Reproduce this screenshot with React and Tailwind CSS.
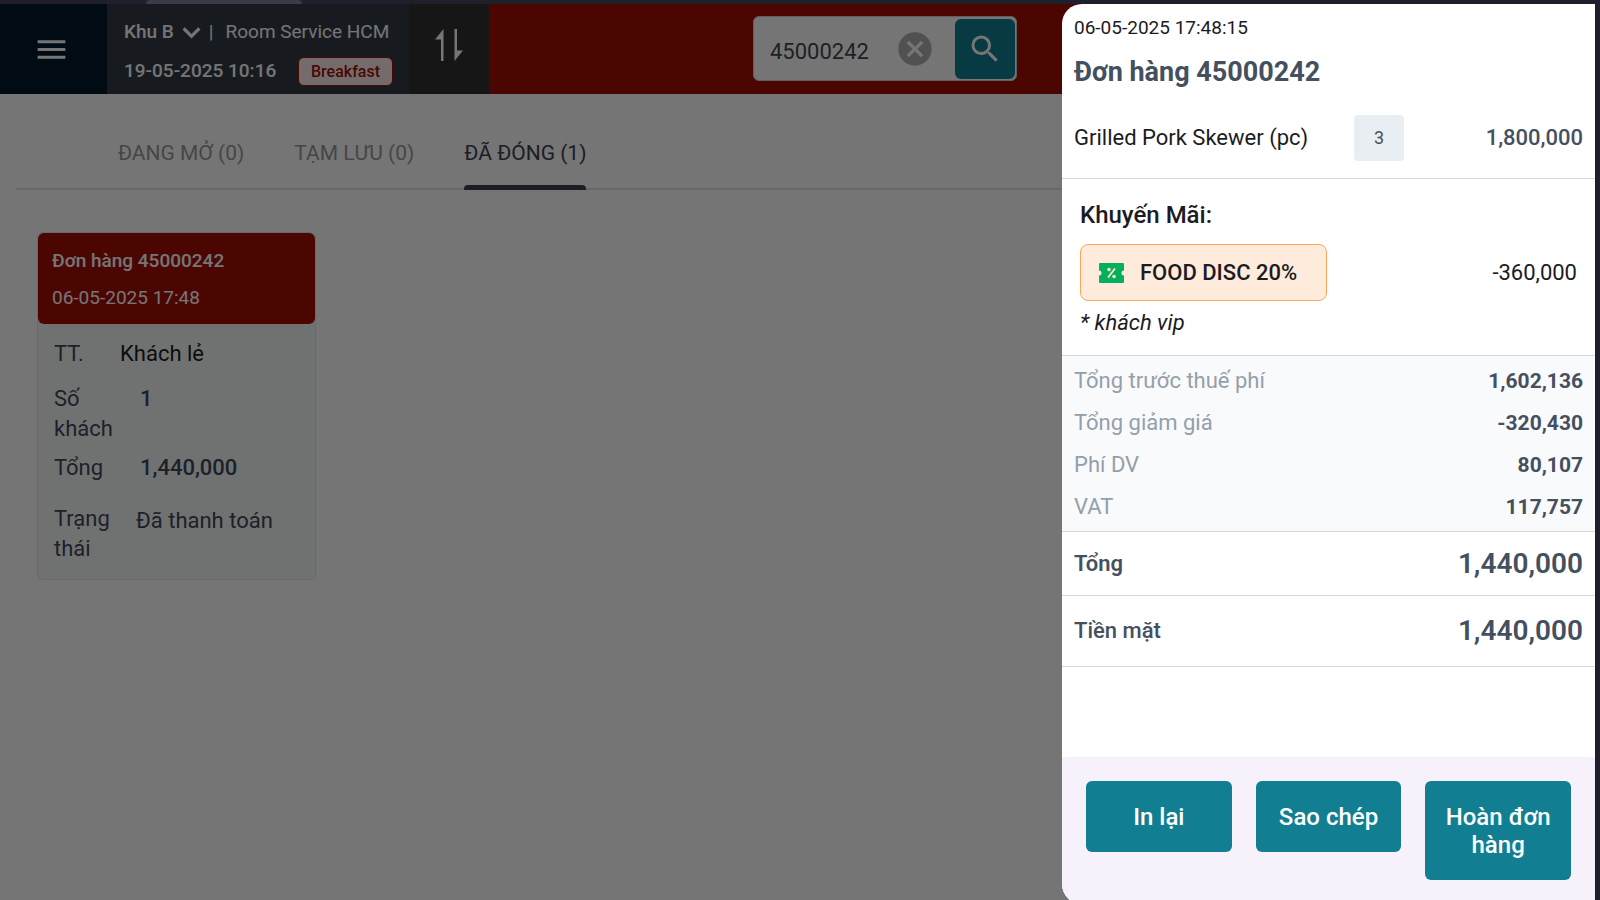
import React from "react";
import { MdMenu, MdSearch, MdCancel } from "react-icons/md";

const tabs = [
  { name: "ĐANG MỞ (0)" },
  { name: "TẠM LƯU (0)" },
  { name: "ĐÃ ĐÓNG (1)", active: true },
];

const fees = [
  { label: "Tổng trước thuế phí", value: "1,602,136" },
  { label: "Tổng giảm giá", value: "-320,430" },
  { label: "Phí DV", value: "80,107" },
  { label: "VAT", value: "117,757" },
];

const App = () => {
  return (
    <div className="h-screen overflow-hidden flex flex-col bg-[#1f1f2b] font-['Roboto',sans-serif] text-[22px] leading-[30px] text-[#1c1b1f]">
      {/* Window edge */}
      <div className="h-1 shrink-0 pl-[146px]">
        <div className="h-1 w-[156px] bg-[#3b3a48] rounded-t-lg" />
      </div>

      <div className="relative h-full shrink-0 mr-[5px] bg-white">
        <Header />
        <main>
          <Tabs />
          <div className="pl-[37px] pt-[42px]">
            <OrderCard />
          </div>
        </main>

        {/* Backdrop */}
        <div className="absolute inset-0 bg-black/54" />
        <OrderDrawer />
      </div>
    </div>
  );
};

const Header = () => {
  return (
    <header className="flex h-[90px] bg-[#a60e05] text-white">
      <button
        aria-label="Menu"
        className="w-[107px] flex items-center justify-center bg-[#001a2c] pr-1"
      >
        <MdMenu className="size-[37px]" />
      </button>

      <div className="w-[302px] bg-[#343b46] pl-[17px] pt-[13px] text-[19px]">
        <div className="flex items-center">
          <button className="flex items-center font-medium">
            Khu B
            <svg
              className="ml-2 w-[19px] h-[13px]"
              viewBox="0 0 20 14"
              fill="none"
              stroke="currentColor"
              strokeWidth="3.4"
            >
              <path d="M1.500 2.500l8.500 8.500 8.500-8.500" />
            </svg>
          </button>
          <span className="ml-2">|</span>
          <span className="ml-3">Room Service HCM</span>
        </div>
        <div className="mt-[9px] flex items-center">
          <span className="w-[174px] font-medium">19-05-2025 10:16</span>
          <span className="h-[29px] w-[95px] rounded-md border border-[#a60e05] bg-[#fdeceb] text-center text-base leading-[28px] font-medium text-[#a60e05]">
            Breakfast
          </span>
        </div>
      </div>

      <button
        aria-label="Sắp xếp"
        className="w-[80px] flex items-center justify-center bg-[#303032]"
      >
        <svg className="w-[28px] h-[32px] mb-2" viewBox="0 0 28 32" fill="#fff">
          <path d="M8.5 0V32H6V10.500H0Z" />
          <path d="M19.500 32V0H22V21.500H28Z" />
        </svg>
      </button>

      <div className="ml-[264px] mt-3 h-[65px] w-[264px] flex items-center rounded-md border border-[#d0d0d0] bg-white">
        <input
          aria-label="Tìm đơn hàng"
          defaultValue="45000242"
          className="w-[141px] pl-4 pt-[6px] text-[#43484f] outline-none"
        />
        <button aria-label="Xóa" className="text-[#b0b0b0]">
          <MdCancel className="size-[40px]" />
        </button>
        <button
          aria-label="Tìm kiếm"
          className="ml-auto mr-px h-[60px] w-[60px] flex items-center justify-center rounded-md bg-[#117e91]"
        >
          <MdSearch className="size-[36px]" />
        </button>
      </div>
    </header>
  );
};

const Tabs = () => {
  return (
    <nav className="ml-4 flex gap-[50px] border-b-2 border-[#e2e2e4] pl-[102px] pt-11 text-[21px]">
      {tabs.map((tab) => (
        <a
          key={tab.name}
          href="#"
          className={
            tab.active
              ? "-mb-0.5 h-[52px] text-[#3c4251] after:mt-[17px] after:block after:h-[5px] after:rounded-t-sm after:bg-[#3c4251]"
              : "text-[#9a9a9a]"
          }
        >
          {tab.name}
        </a>
      ))}
    </nav>
  );
};

const OrderCard = () => {
  return (
    <article className="w-[279px] rounded-md border border-[#e0e4e6] bg-[#f4f9f8] text-[#43485a]">
      <div className="h-[91px] rounded-md bg-[#a60e05] px-[14px] pt-[13px] text-[19px] text-white">
        <h2 className="font-medium">Đơn hàng 45000242</h2>
        <p className="mt-[7px]">06-05-2025 17:48</p>
      </div>
      <dl className="px-4 py-[15px]">
        <div className="flex">
          <dt className="w-[66px]">TT.</dt>
          <dd className="text-[#1c1b1f]">Khách lẻ</dd>
        </div>
        <div className="mt-[15px] flex">
          <dt className="w-[60px] mr-[26px]">Số khách</dt>
          <dd className="font-medium">1</dd>
        </div>
        <div className="mt-[9px] flex">
          <dt className="w-[60px] mr-[26px]">Tổng</dt>
          <dd className="font-medium">1,440,000</dd>
        </div>
        <div className="mt-[21px] flex">
          <dt className="w-[60px] mr-[22px]">Trạng thái</dt>
          <dd className="pt-0.5">Đã thanh toán</dd>
        </div>
      </dl>
    </article>
  );
};

const OrderDrawer = () => {
  return (
    <aside className="absolute inset-y-0 right-0 flex w-1/3 min-w-[533px] flex-col overflow-hidden rounded-l-[20px] bg-white">
      <div className="px-3 pt-[9px]">
        <p className="text-[19px]">06-05-2025 17:48:15</p>
        <h1 className="mt-[11px] text-[27px] leading-[36px] font-bold text-[#45505e]">
          Đơn hàng 45000242
        </h1>
      </div>

      <div className="mt-[25px] flex items-center border-b border-[#d6d6d8] px-3 pb-[17px]">
        <span className="w-[280px]">Grilled Pork Skewer (pc)</span>
        <span className="h-[46px] w-[50px] rounded-sm bg-[#e9eef2] text-center text-lg leading-[46px] text-[#45505e]">
          3
        </span>
        <span className="ml-auto font-medium text-[#45505e]">1,800,000</span>
      </div>

      <section className="border-b border-[#d6d6d8] px-[18px] pt-5 pb-[17px]">
        <h2 className="text-2xl leading-[32px] font-medium">Khuyến Mãi:</h2>
        <div className="mt-[13px] flex items-center justify-between">
          <div className="flex h-[57px] w-[247px] items-center rounded-lg border border-[#fba757] bg-[#ffebdb] pl-[18px] font-medium">
            <VoucherIcon />
            <span className="ml-4">FOOD DISC 20%</span>
          </div>
          <span>-360,000</span>
        </div>
        <p className="mt-[7px] italic">* khách vip</p>
      </section>

      <dl className="flex flex-col gap-3 border-b border-[#d6d6d8] bg-[#f9fafc] px-3 pt-[10px] pb-[9px]">
        {fees.map((fee) => (
          <div key={fee.label} className="flex justify-between">
            <dt className="text-[#93a0ab]">{fee.label}</dt>
            <dd className="text-[21px] font-bold text-[#45505e]">{fee.value}</dd>
          </div>
        ))}
      </dl>

      <TotalRow label="Tổng" value="1,440,000" className="h-[64px] font-semibold" />
      <TotalRow label="Tiền mặt" value="1,440,000" className="h-[71px] font-medium" />

      <footer className="mt-auto grid h-[147px] grid-cols-3 items-start gap-6 bg-[#f6f1fa] px-6 pt-6">
        <ActionButton>In lại</ActionButton>
        <ActionButton>Sao chép</ActionButton>
        <ActionButton>Hoàn đơn hàng</ActionButton>
      </footer>
    </aside>
  );
};

const TotalRow = ({ label, value, className }) => {
  return (
    <div
      className={`flex items-center justify-between border-b border-[#d6d6d8] px-3 text-[#45505e] ${className}`}
    >
      <span>{label}</span>
      <span className="text-[28px] font-semibold">{value}</span>
    </div>
  );
};

const ActionButton = ({ children }) => {
  return (
    <button className="rounded-md bg-[#117e91] px-4 pt-[22px] pb-[21px] text-2xl leading-[28px] font-medium text-white">
      {children}
    </button>
  );
};

const VoucherIcon = () => {
  return (
    <svg className="w-[25px] h-[20px]" viewBox="0 0 25 20">
      <path
        fill="#05b05a"
        d="M1 0H24Q25 0 25 1V7.500A2.500 2.500 0 0 0 25 12.500V19Q25 20 24 20H1Q0 20 0 19V12.500A2.500 2.500 0 0 0 0 7.500V1Q0 0 1 0Z"
      />
      <path d="M9 14.500L16 5.500" stroke="#ffebdb" strokeWidth="1.800" />
      <circle cx="10" cy="6.500" r="1.800" fill="#ffebdb" />
      <circle cx="15" cy="13.500" r="1.800" fill="#ffebdb" />
    </svg>
  );
};

export default App;
